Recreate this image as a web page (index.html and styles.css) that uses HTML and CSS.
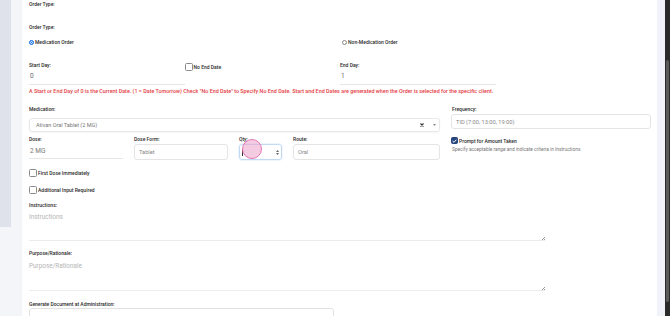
FILE: index.html
```html
<!DOCTYPE html>
<html lang="en">
<head>
    <meta charset="UTF-8">
    <meta name="viewport" content="width=device-width, initial-scale=1.0">
    <title>Order Entry</title>
    <link rel="stylesheet" href="styles.css">
</head>
<body>

<div class="page">
    <aside class="side">
        <div class="side-panel"></div>
    </aside>

    <main class="card">
        <div class="label gap-big">Order Type:</div>
        <div class="label gap-small">Order Type:</div>

        <div class="radio-row">
            <div class="radio-item"><span class="radio checked"></span>Medication Order</div>
            <div class="radio-item shifted"><span class="radio"></span>Non-Medication Order</div>
        </div>

        <div class="day-row">
            <div class="field">
                <div class="label">Start Day:</div>
                <div class="line-input">0</div>
            </div>
            <div class="check-item nudge">
                <span class="checkbox"></span>No End Date
            </div>
            <div class="field">
                <div class="label">End Day:</div>
                <div class="line-input">1</div>
            </div>
            <div></div>
        </div>

        <p class="warning">A Start or End Day of 0 is the Current Date. (1 = Date Tomorrow) Check "No End Date" to Specify No End Date. Start and End Dates are generated when the Order is selected for the specific client.</p>

        <div class="med-grid">
            <div class="med-left">
                <div class="label">Medication:</div>
                <div class="select">
                    <span class="select-text">Ativan Oral Tablet (2 MG)</span>
                    <svg class="clear" width="4" height="4" viewBox="0 0 4 4"><path d="M0.5 0.5 L3.5 3.5 M3.5 0.5 L0.5 3.5" stroke="#333" stroke-width="1.1"/></svg>
                    <svg class="caret" width="3" height="2" viewBox="0 0 3 2"><path d="M0 0 L3 0 L1.5 2 Z" fill="#888"/></svg>
                </div>

                <div class="dose-row">
                    <div class="field">
                        <div class="label">Dose:</div>
                        <div class="line-input dose">2 MG</div>
                    </div>
                    <div class="field">
                        <div class="label">Dose Form:</div>
                        <div class="box-input">Tablet</div>
                    </div>
                    <div class="field qty">
                        <div class="label">Qty:</div>
                        <div class="box-input focused">
                            <span class="caret-line"></span>
                            <svg class="spin" width="3" height="5" viewBox="0 0 3 5"><path d="M0 2 L1.5 0 L3 2 Z M0 3 L3 3 L1.5 5 Z" fill="#666"/></svg>
                        </div>
                        <span class="click-dot"></span>
                    </div>
                    <div class="field">
                        <div class="label">Route:</div>
                        <div class="box-input">Oral</div>
                    </div>
                </div>
            </div>

            <div class="med-right">
                <div class="label inset">Frequency:</div>
                <div class="box-input freq">TID (7:00, 13:00, 19:00)</div>
                <div class="check-item prompt">
                    <span class="checkbox small checked">
                        <svg width="5" height="4" viewBox="0 0 5 4"><path d="M0.6 2 L2 3.3 L4.4 0.7" stroke="#fff" stroke-width="1" fill="none"/></svg>
                    </span>Prompt for Amount Taken
                </div>
                <div class="hint">Specify acceptable range and indicate criteria in Instructions</div>
            </div>
        </div>

        <div class="check-item first-dose"><span class="checkbox"></span>First Dose Immediately</div>
        <div class="check-item extra"><span class="checkbox"></span>Additional Input Required</div>

        <div class="label section">Instructions:</div>
        <div class="note-wrap">
            <textarea class="note" placeholder="Instructions"></textarea>
            <span class="grip"></span>
        </div>

        <div class="label section purpose">Purpose/Rationale:</div>
        <div class="note-wrap tall">
            <textarea class="note" placeholder="Purpose/Rationale"></textarea>
            <span class="grip"></span>
        </div>

        <div class="label section doc-label">Generate Document at Administration:</div>
        <div class="doc-box"></div>
    </main>

    <div class="gutter"></div>
    <div class="scrollbar"><div class="thumb"></div></div>
</div>

</body>
</html>
```

FILE: styles.css
```css
body {
    margin: 0;
    font-family: Roboto, "Liberation Sans", sans-serif;
    background-color: #f4f5f9;
    color: #2e2e2e;
    overflow: hidden;
}

.page {
    display: flex;
    height: 316px;
    overflow: hidden;
}

.side {
    width: 22px;
    flex-shrink: 0;
}

.side-panel {
    width: 11px;
    height: 227px;
    background-color: #dfe2ea;
}

.card {
    width: 635px;
    flex-shrink: 0;
    box-sizing: border-box;
    padding: 0 6px 0 7px;
    background-color: #fff;
}

.gutter {
    width: 8px;
    background-color: #f2f3fa;
}

.scrollbar {
    width: 5px;
    background-color: #2a2a2a;
}

.thumb {
    width: 3px;
    height: 242px;
    margin: 60px 0 0 1px;
    border-radius: 1.5px;
    background-color: #5a5a5a;
}

/* Labels and text */
.label {
    height: 8px;
    line-height: 8px;
    font-size: 5px;
    font-weight: 500;
    color: #2b2b2b;
    white-space: nowrap;
}

.gap-big { margin-bottom: 15px; }
.gap-small { margin-bottom: 7px; }
.inset { padding-left: 1px; }

.warning {
    margin: 2px 0 0;
    height: 8px;
    line-height: 8px;
    font-size: 5.4px;
    font-weight: 500;
    color: #e43b3f;
    white-space: nowrap;
}

.hint {
    margin-top: 2px;
    padding-left: 1px;
    line-height: 8px;
    font-size: 4.8px;
    color: #777;
    white-space: nowrap;
}

/* Radios */
.radio-row {
    display: grid;
    grid-template-columns: 1fr 1fr;
    height: 8px;
    margin-bottom: 15px;
}

.radio-item {
    display: flex;
    align-items: center;
    gap: 1px;
    font-size: 5px;
    font-weight: 500;
    color: #2b2b2b;
}

.radio-item.shifted { padding-left: 2px; }

.radio {
    width: 5px;
    height: 5px;
    box-sizing: border-box;
    border-radius: 50%;
    border: 0.7px solid #888;
    background-color: #fff;
}

.radio.checked {
    border-color: #1a73e8;
    background-color: #1a73e8;
    box-shadow: inset 0 0 0 0.7px #fff;
}

/* Checkboxes */
.check-item {
    display: flex;
    align-items: center;
    gap: 1px;
    height: 8px;
    font-size: 5px;
    font-weight: 500;
    color: #2b2b2b;
    white-space: nowrap;
}

.checkbox {
    width: 8px;
    height: 8px;
    box-sizing: border-box;
    flex-shrink: 0;
    border: 1px solid #8a8a8a;
    border-radius: 1.5px;
    background-color: #fff;
}

.checkbox.small {
    width: 7px;
    height: 7px;
}

.checkbox.checked {
    display: flex;
    align-items: center;
    justify-content: center;
    border-color: #27467f;
    background-color: #27467f;
}

.nudge { margin-top: 2px; }
.prompt { margin-top: 8px; height: 7px; }
.first-dose { margin-top: 9px; }
.extra { margin-top: 9px; }

/* Start / end day */
.day-row {
    display: grid;
    grid-template-columns: repeat(4, 1fr);
    align-items: start;
}

.line-input {
    height: 16px;
    box-sizing: border-box;
    line-height: 15px;
    font-size: 6.5px;
    color: #666;
    border-bottom: 1px solid #e6e6e6;
    padding-left: 1px;
}

/* Medication block */
.med-grid {
    display: grid;
    grid-template-columns: 411px 200px;
    column-gap: 11px;
    margin-top: 10px;
}

.select {
    display: flex;
    align-items: center;
    height: 14px;
    margin-top: 5px;
    box-sizing: border-box;
    padding: 0 3px 0 6px;
    border: 1px solid #e8e8e8;
    border-radius: 3px;
    box-shadow: 0 1px 2px rgba(0, 0, 0, 0.04);
    font-size: 5.5px;
    color: #777;
}

.select-text { flex: 1; }
.clear { margin-right: 9px; }

.dose-row {
    display: grid;
    grid-template-columns: 94px 94px 43px 1fr;
    column-gap: 11px;
    margin-top: 3px;
}

.field { position: relative; }

.line-input.dose {
    height: 15px;
    margin-top: 1px;
    line-height: 15px;
    font-size: 6.5px;
    color: #777;
}

.box-input {
    display: flex;
    align-items: center;
    height: 16px;
    margin-top: 1px;
    box-sizing: border-box;
    padding: 0 4px;
    border: 1px solid #e4e4e4;
    border-radius: 3px;
    font-size: 5.7px;
    color: #888;
    white-space: nowrap;
}

.box-input.freq {
    height: 15px;
    padding-left: 4px;
}

.box-input.focused {
    justify-content: space-between;
    padding: 0 2px 0 2px;
    border-color: #c3daf5;
    box-shadow: 0 0 0 1px rgba(120, 170, 240, 0.12);
}

.caret-line {
    width: 0.8px;
    height: 7px;
    background-color: #333;
}

.click-dot {
    position: absolute;
    left: 3px;
    top: 4px;
    width: 20px;
    height: 20px;
    box-sizing: border-box;
    border-radius: 50%;
    border: 1px solid #e27ab3;
    background-color: rgba(236, 160, 200, 0.55);
}

/* Notes */
.section { margin-top: 7px; }
.purpose { margin-top: 8px; }
.doc-label { margin-top: 9px; }

.note-wrap {
    position: relative;
    width: 516px;
    height: 32px;
}

.note-wrap.tall {
    height: 33px;
    margin-top: 1px;
}

.note {
    display: block;
    width: 100%;
    height: 100%;
    box-sizing: border-box;
    margin: 0;
    padding: 4px 0 0;
    border: none;
    border-bottom: 1px solid #ececec;
    font-family: Roboto, "Liberation Sans", sans-serif;
    font-size: 6.4px;
    line-height: 8px;
    color: #555;
    outline: none;
    resize: none;
}

.note::placeholder { color: #b4b4b4; }

.grip {
    position: absolute;
    right: 0;
    bottom: 1px;
    width: 3px;
    height: 3px;
    background: linear-gradient(135deg, transparent 45%, #9a9a9a 45%, #9a9a9a 60%, transparent 60%, transparent 75%, #9a9a9a 75%);
}

.doc-box {
    width: 305px;
    height: 20px;
    box-sizing: border-box;
    border: 1px solid #e2e2e2;
    border-radius: 3px;
}
```
